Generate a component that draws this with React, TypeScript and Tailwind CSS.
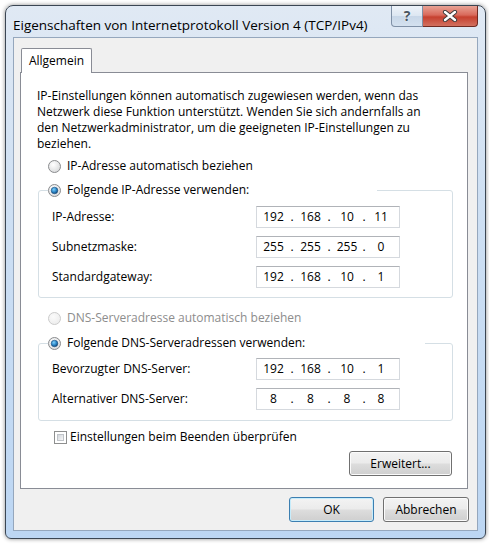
import React, { Fragment } from "react";

function Radio({ checked = false, disabled = false }: { checked?: boolean; disabled?: boolean }) {
  return (
    <svg width="13" height="13" viewBox="0 0 13 13" className="shrink-0">
      <defs>
        <radialGradient id="rfill" cx="0.4" cy="0.35" r="0.7">
          <stop offset="0" stopColor="#ffffff" />
          <stop offset="1" stopColor="#d8d9da" />
        </radialGradient>
        <radialGradient id="rfilld" cx="0.4" cy="0.35" r="0.7">
          <stop offset="0" stopColor="#fbfbfb" />
          <stop offset="1" stopColor="#ececec" />
        </radialGradient>
        <radialGradient id="rdot" cx="0.4" cy="0.35" r="0.7">
          <stop offset="0" stopColor="#7fd0fa" />
          <stop offset="0.55" stopColor="#2b86c7" />
          <stop offset="1" stopColor="#0d3d6a" />
        </radialGradient>
      </defs>
      <circle
        cx="6.5"
        cy="6.5"
        r="6"
        fill={disabled ? "url(#rfilld)" : "url(#rfill)"}
        stroke={disabled ? "#cbcbcb" : "#8a8c8e"}
        strokeWidth="1"
      />
      {checked && <circle cx="6.5" cy="6.5" r="3.3" fill="url(#rdot)" stroke="#1b4f80" strokeWidth="0.6" />}
    </svg>
  );
}

function Checkbox() {
  return (
    <div className="w-[13px] h-[13px] shrink-0 border border-[#8e8f8f] bg-white p-[2px]">
      <div className="w-full h-full bg-[linear-gradient(135deg,#d3d7dc,#f7f7f7)] border border-[#c0c4c9]" />
    </div>
  );
}

function IpBox({ parts }: { parts: string[] }) {
  const segW = ["w-[29px]", "w-[29px]", "w-[28px]", "w-[28px]"];
  const dotW = ["w-[8px]", "w-[8px]", "w-[6px]"];
  return (
    <div className="w-[144px] h-[22px] shrink-0 bg-white border border-[#d5d9de] border-t-[#b0b3b8] flex items-center pl-[2px] text-black">
      {parts.map((p, i) => (
        <Fragment key={i}>
          <span className={`${segW[i]} text-center`}>{p}</span>
          {i < 3 && <span className={`${dotW[i]} text-center`}>.</span>}
        </Fragment>
      ))}
    </div>
  );
}

function Field({ label, parts }: { label: string; parts: string[] }) {
  return (
    <div className="flex items-center h-[22px]">
      <div className="w-[204px] whitespace-nowrap">{label}</div>
      <IpBox parts={parts} />
    </div>
  );
}

function Btn({ children, w, def = false }: { children: React.ReactNode; w: string; def?: boolean }) {
  return (
    <div
      className={`${w} h-[25px] rounded-[3px] border flex items-center justify-center text-black ${
        def
          ? "border-[#3c7fb1] shadow-[inset_0_0_0_1px_#c6ecfb]"
          : "border-[#707070] shadow-[inset_0_0_0_1px_#fbfbfb]"
      } bg-[linear-gradient(to_bottom,#f3f3f3_0%,#ebebeb_48%,#dddddd_52%,#cfcfcf_100%)]`}
    >
      {children}
    </div>
  );
}

export default function App() {
  return (
    <div className="w-[489px] h-[544px] bg-white pl-[5px] pt-[5px] font-['Open_Sans',sans-serif] text-[12px] leading-[16px] text-black">
      <div className="w-[481px] h-[534px] rounded-t-[8px] rounded-b-[6px] border border-[#3b4653] shadow-[0_0_4px_rgba(0,0,0,0.45)] bg-[linear-gradient(to_bottom,#e0e9f4_0%,#cfe0f3_35%,#bcd6f3_100%)] px-[7px] pb-[7px] flex flex-col">
        {/* title bar */}
        <div className="h-[31px] flex items-start shrink-0">
          <div className="pt-[11px] text-[13.5px] leading-[16px] whitespace-nowrap text-black flex-1">
            Eigenschaften von Internetprotokoll Version 4 (TCP/IPv4)
          </div>
          <div className="flex">
            <div className="w-[32px] h-[21px] rounded-bl-[4px] border border-[#7f90a6] border-t-0 bg-[linear-gradient(to_bottom,#eef3f9_0%,#dde7f2_48%,#c8d7e8_52%,#d4e1ef_100%)] flex items-center justify-center">
              <span className="text-[14px] font-bold text-[#4a5560] leading-none [text-shadow:0_0_2px_#fff]">?</span>
            </div>
            <div className="w-[55px] h-[21px] rounded-br-[4px] border border-[#6f2a22] border-t-0 border-l-0 bg-[linear-gradient(to_bottom,#e8a395_0%,#d9695b_45%,#c6402f_55%,#d2705f_100%)] flex items-center justify-center">
              <svg width="16" height="12" viewBox="0 0 16 12">
                <path d="M3 2 L13 10 M13 2 L3 10" stroke="#3a3a3a" strokeWidth="4.2" strokeLinecap="round" />
                <path d="M3 2 L13 10 M13 2 L3 10" stroke="#ffffff" strokeWidth="2.4" strokeLinecap="round" />
              </svg>
            </div>
          </div>
        </div>

        {/* client area */}
        <div className="w-[465px] h-[494px] border border-[#95a7bd] bg-[#f0f0f0] flex flex-col">
          <div className="pt-[10px] pl-[6px]">
            <div className="flex pl-[1px]">
              <div className="relative z-10 w-[71px] h-[25px] -mb-[1px] bg-white border border-[#898c95] border-b-0 rounded-t-[2px] flex items-center justify-center">
                Allgemein
              </div>
            </div>
            <div className="w-[448px] h-[417px] bg-white border border-[#898c95] flex flex-col">
              <div className="pl-[16px] pt-[15px] whitespace-nowrap">
                IP-Einstellungen können automatisch zugewiesen werden, wenn das
                <br />
                Netzwerk diese Funktion unterstützt. Wenden Sie sich andernfalls an
                <br />
                den Netzwerkadministrator, um die geeigneten IP-Einstellungen zu
                <br />
                beziehen.
              </div>

              <div className="mt-[6px] pl-[27px] h-[16px] flex items-center">
                <Radio />
                <span className="ml-[6px]">IP-Adresse automatisch beziehen</span>
              </div>

              <fieldset className="mt-[8px] ml-[17px] w-[415px] border border-[#d5dfe5] rounded-[3px] pl-[13px] pb-[9px] pt-[8px]">
                <legend className="ml-[-4px] w-[329px] h-[16px]">
                  <div className="flex items-center h-[16px]">
                    <Radio checked />
                    <span className="ml-[6px]">Folgende IP-Adresse verwenden:</span>
                  </div>
                </legend>
                <div className="flex flex-col gap-[8px]">
                  <Field label="IP-Adresse:" parts={["192", "168", "10", "11"]} />
                  <Field label="Subnetzmaske:" parts={["255", "255", "255", "0"]} />
                  <Field label="Standardgateway:" parts={["192", "168", "10", "1"]} />
                </div>
              </fieldset>

              <div className="mt-[12px] pl-[27px] h-[16px] flex items-center text-[#8d8d8d]">
                <Radio disabled />
                <span className="ml-[6px]">DNS-Serveradresse automatisch beziehen</span>
              </div>

              <fieldset className="mt-[9px] ml-[17px] w-[415px] border border-[#d5dfe5] rounded-[3px] pl-[13px] pb-[10px] pt-[7px]">
                <legend className="ml-[-4px] w-[377px] h-[16px]">
                  <div className="flex items-center h-[16px]">
                    <Radio checked />
                    <span className="ml-[6px]">Folgende DNS-Serveradressen verwenden:</span>
                  </div>
                </legend>
                <div className="flex flex-col gap-[8px]">
                  <Field label="Bevorzugter DNS-Server:" parts={["192", "168", "10", "1"]} />
                  <Field label="Alternativer DNS-Server:" parts={["8", "8", "8", "8"]} />
                </div>
              </fieldset>

              <div className="mt-[8px] pl-[33px] h-[16px] flex items-center">
                <Checkbox />
                <span className="ml-[3px]">Einstellungen beim Beenden überprüfen</span>
              </div>

              <div className="mt-[6px] flex justify-end pr-[15px]">
                <Btn w="w-[103px]">Erweitert...</Btn>
              </div>
            </div>
          </div>

          <div className="mt-[8px] flex justify-end gap-[9px] pr-[8px]">
            <Btn w="w-[85px]" def>
              OK
            </Btn>
            <Btn w="w-[86px]">Abbrechen</Btn>
          </div>
        </div>
      </div>
    </div>
  );
}
